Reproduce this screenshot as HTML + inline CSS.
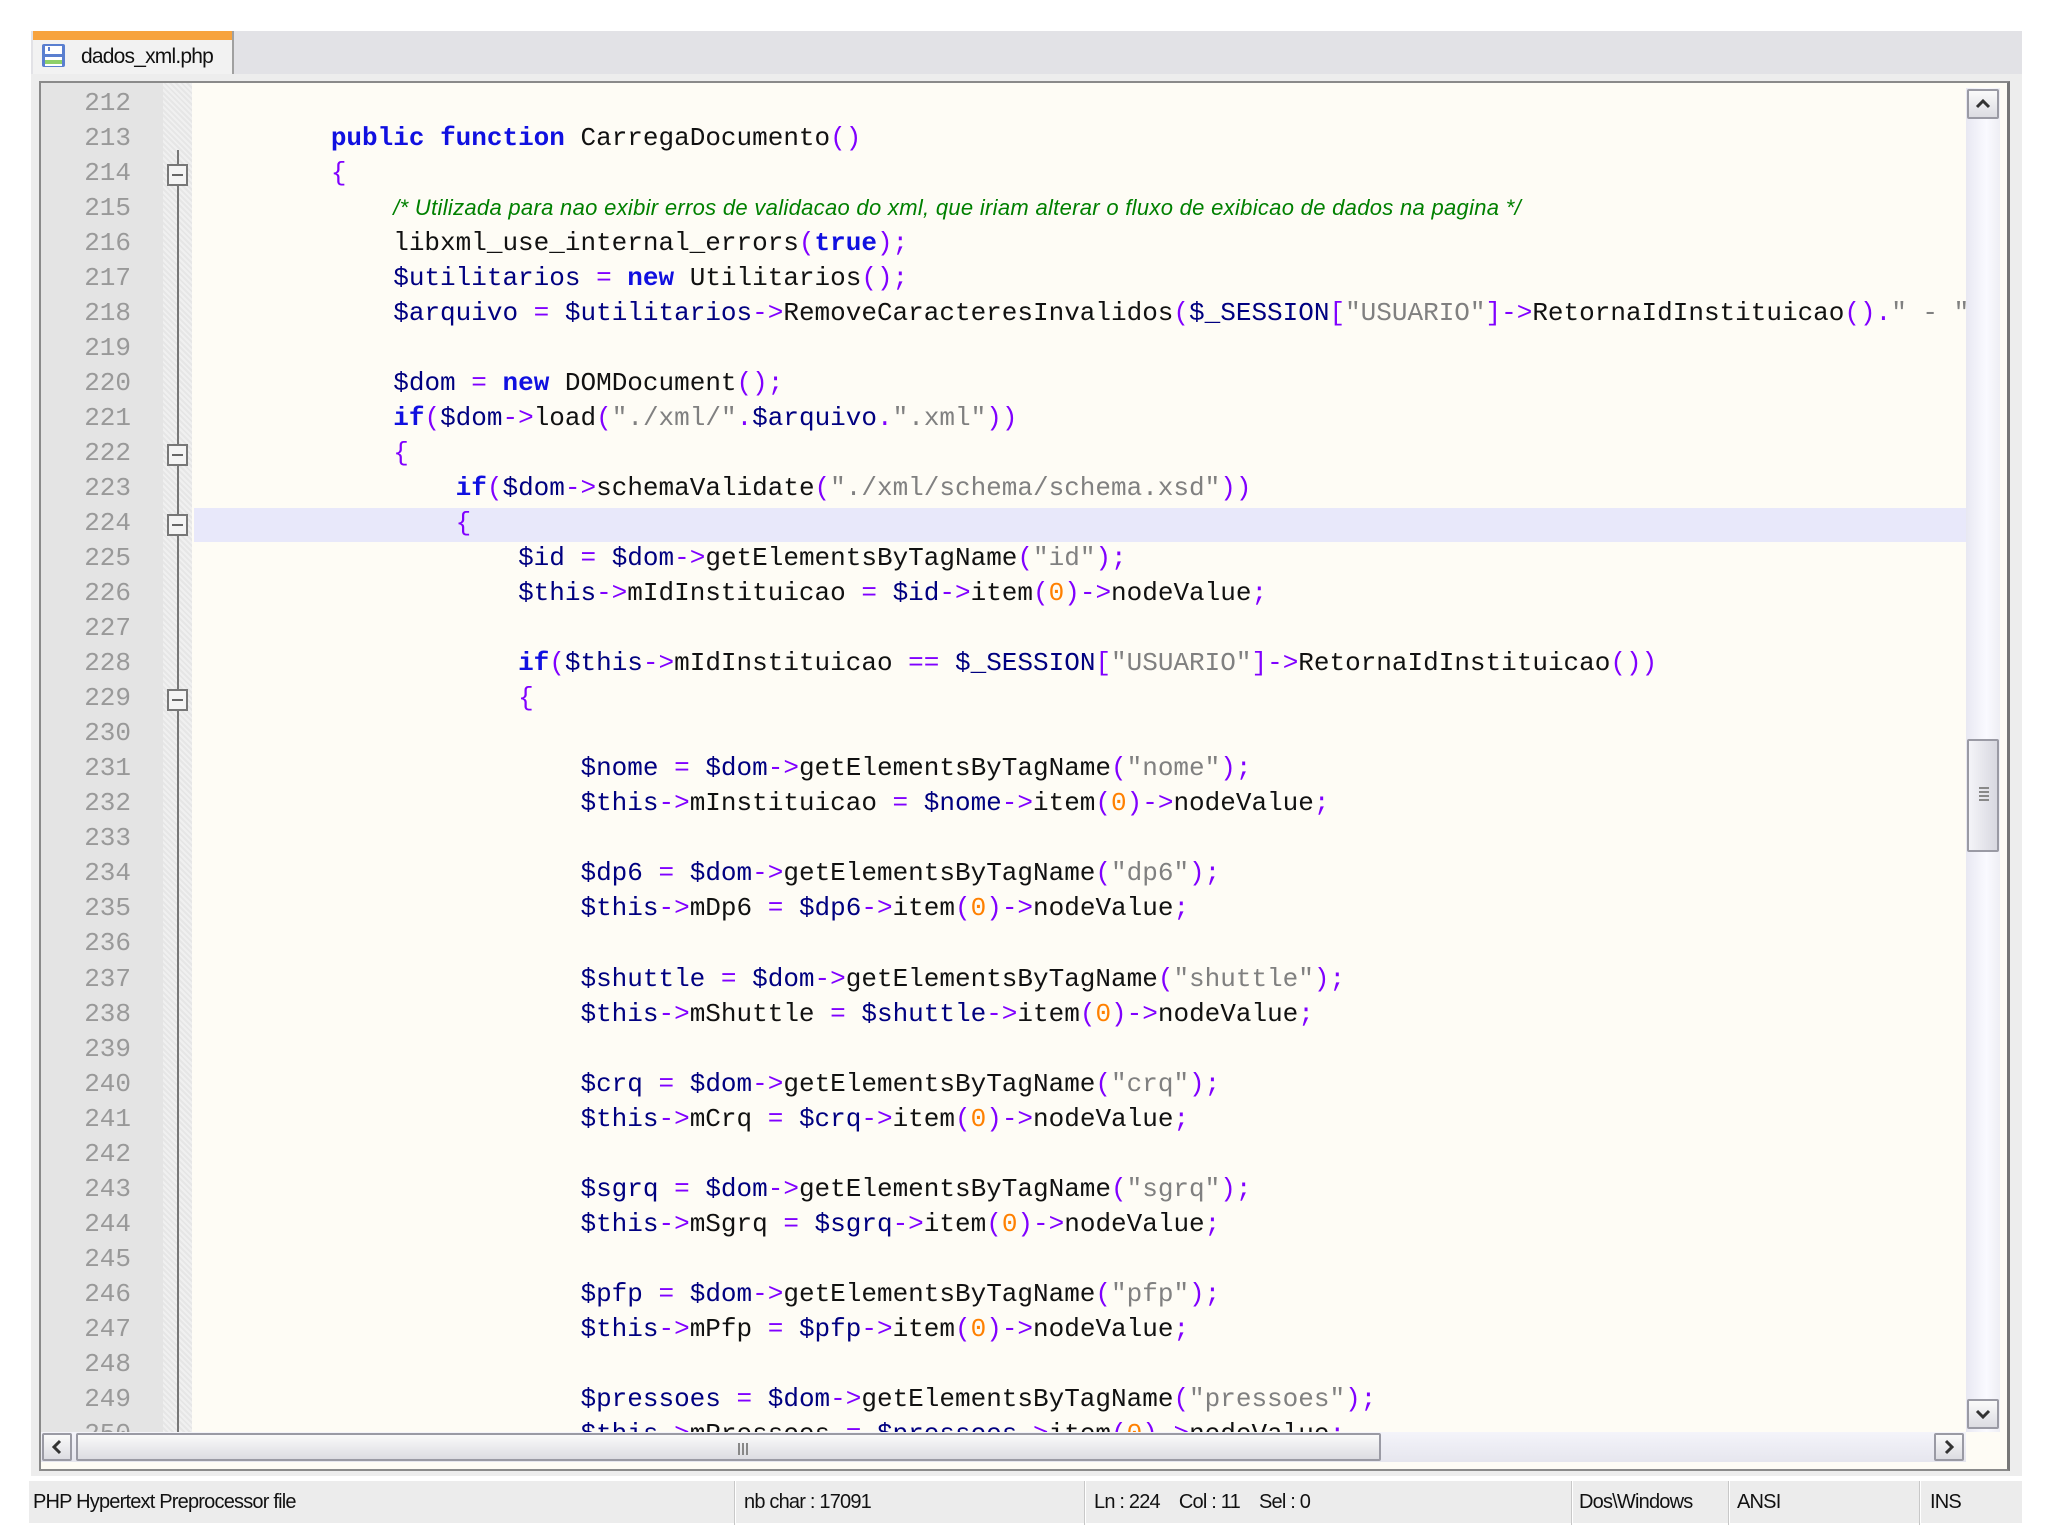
<!DOCTYPE html>
<html><head><meta charset="utf-8"><style>
*{margin:0;padding:0;box-sizing:border-box}
body{width:2048px;height:1535px;background:#fff;position:relative;overflow:hidden;font-family:"Liberation Sans",sans-serif}
.abs{position:absolute}
#strip{left:31px;top:31px;width:1991px;height:43px;background:#e2e2e6}
#tab{left:33px;top:31px;width:201px;height:45px;background:#f2f2f2;border-right:2px solid #a0a0a0}
#tab .bar{position:absolute;left:0;top:0;width:100%;height:9px;background:#f7a33e}
#tab .t{position:absolute;left:48px;top:14px;font-size:21px;color:#111;letter-spacing:-0.8px}
#frame{left:31px;top:74px;width:1991px;height:1402px;background:#ededed}
#ed{left:39px;top:81px;width:1971px;height:1390px;border:2px solid #8a8a8a;border-right:3px solid #777;background:#fefcf5}
#gut{left:41px;top:83px;width:122px;height:1349px;background:#e4e4e4}
#fold{left:163px;top:83px;width:29px;height:1349px;background:repeating-linear-gradient(45deg,#f0f0f0 0 2px,#e6e6e6 2px 4px)}
#vline{left:177px;top:150px;width:2px;height:1282px;background:#777}
.fb{position:absolute;left:167px;width:21px;height:22px;border:2px solid #777;background:#f4f4f4}
.fb:after{content:"";position:absolute;left:3px;right:3px;top:8px;height:2px;background:#666}
#hl{left:194px;top:508px;width:1778px;height:34px;background:#e8e8fa}
#code{left:41px;top:86px;width:1925px;height:1346px;overflow:hidden}
.ln{position:absolute;left:0;width:90px;text-align:right;font:26px "Liberation Mono",monospace;color:#999;height:35px;line-height:35px}
.cl{position:absolute;left:165px;white-space:pre;font:26px "Liberation Mono",monospace;color:#111;height:35px;line-height:35px}
.k{color:#1010e0;font-weight:bold}.v{color:#000080}.o{color:#8000ff}.s{color:#808080}.n{color:#ff8000}
.c{color:#008000;font:italic 22px "Liberation Sans",sans-serif;letter-spacing:0.3px}
#vs{left:1966px;top:88px;width:34px;height:1344px;background:linear-gradient(90deg,#e8e8f2,#fafaff 60%,#eeeef4)}
.btn{position:absolute;background:linear-gradient(#fafafa,#dcdce2);border:2px solid #9a9aa4;border-radius:2px}
.btn svg{position:absolute;left:50%;top:50%;transform:translate(-50%,-50%)}
#hs{left:41px;top:1432px;width:1925px;height:30px;background:linear-gradient(#f4f4fa,#e6e6ee)}
#status{left:29px;top:1479px;width:1993px;height:44px;background:#ececec;border-top:2px solid #fff;font-size:20px;color:#111;letter-spacing:-0.8px}
#status span{position:absolute;top:10px}
#status i{position:absolute;top:0;width:2px;height:44px;background:#fff;border-left:1px solid #c8c8c8}
</style></head><body>
<div id="strip" class="abs"></div>
<div id="tab" class="abs"><div class="bar"></div>
<svg style="position:absolute;left:8px;top:12px" width="26" height="26" viewBox="0 0 26 26"><rect x="1" y="1" width="23" height="23" rx="2" fill="#5a7fd0"/><rect x="4" y="3" width="17" height="8" fill="#fff"/><rect x="4" y="14" width="17" height="9" fill="#fff"/><rect x="4" y="17" width="17" height="4" fill="#8ed06a"/><rect x="7" y="4" width="2" height="4" fill="#5a7fd0"/></svg>
<div class="t">dados_xml.php</div></div>
<div id="frame" class="abs"></div>
<div id="ed" class="abs"></div>
<div id="gut" class="abs"></div>
<div id="fold" class="abs"></div>
<div id="hl" class="abs"></div>
<div id="vline" class="abs"></div>
<div class="fb" style="top:164px"></div>
<div class="fb" style="top:444px"></div>
<div class="fb" style="top:514px"></div>
<div class="fb" style="top:689px"></div>
<div id="code" class="abs">
<div class="ln" style="top:0px">212</div>
<div class="ln" style="top:35.02px">213</div><div class="cl" style="top:35.02px">        <span class="k">public</span> <span class="k">function</span> CarregaDocumento<span class="o">()</span></div>
<div class="ln" style="top:70.04px">214</div><div class="cl" style="top:70.04px">        <span class="o">{</span></div>
<div class="ln" style="top:105.06px">215</div><div class="cl" style="top:105.06px">            <span class="c">/* Utilizada para nao exibir erros de validacao do xml, que iriam alterar o fluxo de exibicao de dados na pagina */</span></div>
<div class="ln" style="top:140.08px">216</div><div class="cl" style="top:140.08px">            libxml_use_internal_errors<span class="o">(</span><span class="k">true</span><span class="o">);</span></div>
<div class="ln" style="top:175.1px">217</div><div class="cl" style="top:175.1px">            <span class="v">$utilitarios</span> <span class="o">=</span> <span class="k">new</span> Utilitarios<span class="o">();</span></div>
<div class="ln" style="top:210.12px">218</div><div class="cl" style="top:210.12px">            <span class="v">$arquivo</span> <span class="o">=</span> <span class="v">$utilitarios</span><span class="o">-&gt;</span>RemoveCaracteresInvalidos<span class="o">(</span><span class="v">$_SESSION</span><span class="o">[</span><span class="s">"USUARIO"</span><span class="o">]-&gt;</span>RetornaIdInstituicao<span class="o">().</span><span class="s">" - "</span></div>
<div class="ln" style="top:245.14px">219</div>
<div class="ln" style="top:280.16px">220</div><div class="cl" style="top:280.16px">            <span class="v">$dom</span> <span class="o">=</span> <span class="k">new</span> DOMDocument<span class="o">();</span></div>
<div class="ln" style="top:315.18px">221</div><div class="cl" style="top:315.18px">            <span class="k">if</span><span class="o">(</span><span class="v">$dom</span><span class="o">-&gt;</span>load<span class="o">(</span><span class="s">"./xml/"</span><span class="o">.</span><span class="v">$arquivo</span><span class="o">.</span><span class="s">".xml"</span><span class="o">))</span></div>
<div class="ln" style="top:350.2px">222</div><div class="cl" style="top:350.2px">            <span class="o">{</span></div>
<div class="ln" style="top:385.22px">223</div><div class="cl" style="top:385.22px">                <span class="k">if</span><span class="o">(</span><span class="v">$dom</span><span class="o">-&gt;</span>schemaValidate<span class="o">(</span><span class="s">"./xml/schema/schema.xsd"</span><span class="o">))</span></div>
<div class="ln" style="top:420.24px">224</div><div class="cl" style="top:420.24px">                <span class="o">{</span></div>
<div class="ln" style="top:455.26px">225</div><div class="cl" style="top:455.26px">                    <span class="v">$id</span> <span class="o">=</span> <span class="v">$dom</span><span class="o">-&gt;</span>getElementsByTagName<span class="o">(</span><span class="s">"id"</span><span class="o">);</span></div>
<div class="ln" style="top:490.28px">226</div><div class="cl" style="top:490.28px">                    <span class="v">$this</span><span class="o">-&gt;</span>mIdInstituicao <span class="o">=</span> <span class="v">$id</span><span class="o">-&gt;</span>item<span class="o">(</span><span class="n">0</span><span class="o">)-&gt;</span>nodeValue<span class="o">;</span></div>
<div class="ln" style="top:525.3px">227</div>
<div class="ln" style="top:560.32px">228</div><div class="cl" style="top:560.32px">                    <span class="k">if</span><span class="o">(</span><span class="v">$this</span><span class="o">-&gt;</span>mIdInstituicao <span class="o">==</span> <span class="v">$_SESSION</span><span class="o">[</span><span class="s">"USUARIO"</span><span class="o">]-&gt;</span>RetornaIdInstituicao<span class="o">())</span></div>
<div class="ln" style="top:595.34px">229</div><div class="cl" style="top:595.34px">                    <span class="o">{</span></div>
<div class="ln" style="top:630.36px">230</div>
<div class="ln" style="top:665.38px">231</div><div class="cl" style="top:665.38px">                        <span class="v">$nome</span> <span class="o">=</span> <span class="v">$dom</span><span class="o">-&gt;</span>getElementsByTagName<span class="o">(</span><span class="s">"nome"</span><span class="o">);</span></div>
<div class="ln" style="top:700.4px">232</div><div class="cl" style="top:700.4px">                        <span class="v">$this</span><span class="o">-&gt;</span>mInstituicao <span class="o">=</span> <span class="v">$nome</span><span class="o">-&gt;</span>item<span class="o">(</span><span class="n">0</span><span class="o">)-&gt;</span>nodeValue<span class="o">;</span></div>
<div class="ln" style="top:735.42px">233</div>
<div class="ln" style="top:770.44px">234</div><div class="cl" style="top:770.44px">                        <span class="v">$dp6</span> <span class="o">=</span> <span class="v">$dom</span><span class="o">-&gt;</span>getElementsByTagName<span class="o">(</span><span class="s">"dp6"</span><span class="o">);</span></div>
<div class="ln" style="top:805.46px">235</div><div class="cl" style="top:805.46px">                        <span class="v">$this</span><span class="o">-&gt;</span>mDp6 <span class="o">=</span> <span class="v">$dp6</span><span class="o">-&gt;</span>item<span class="o">(</span><span class="n">0</span><span class="o">)-&gt;</span>nodeValue<span class="o">;</span></div>
<div class="ln" style="top:840.48px">236</div>
<div class="ln" style="top:875.5px">237</div><div class="cl" style="top:875.5px">                        <span class="v">$shuttle</span> <span class="o">=</span> <span class="v">$dom</span><span class="o">-&gt;</span>getElementsByTagName<span class="o">(</span><span class="s">"shuttle"</span><span class="o">);</span></div>
<div class="ln" style="top:910.52px">238</div><div class="cl" style="top:910.52px">                        <span class="v">$this</span><span class="o">-&gt;</span>mShuttle <span class="o">=</span> <span class="v">$shuttle</span><span class="o">-&gt;</span>item<span class="o">(</span><span class="n">0</span><span class="o">)-&gt;</span>nodeValue<span class="o">;</span></div>
<div class="ln" style="top:945.54px">239</div>
<div class="ln" style="top:980.56px">240</div><div class="cl" style="top:980.56px">                        <span class="v">$crq</span> <span class="o">=</span> <span class="v">$dom</span><span class="o">-&gt;</span>getElementsByTagName<span class="o">(</span><span class="s">"crq"</span><span class="o">);</span></div>
<div class="ln" style="top:1015.58px">241</div><div class="cl" style="top:1015.58px">                        <span class="v">$this</span><span class="o">-&gt;</span>mCrq <span class="o">=</span> <span class="v">$crq</span><span class="o">-&gt;</span>item<span class="o">(</span><span class="n">0</span><span class="o">)-&gt;</span>nodeValue<span class="o">;</span></div>
<div class="ln" style="top:1050.6px">242</div>
<div class="ln" style="top:1085.62px">243</div><div class="cl" style="top:1085.62px">                        <span class="v">$sgrq</span> <span class="o">=</span> <span class="v">$dom</span><span class="o">-&gt;</span>getElementsByTagName<span class="o">(</span><span class="s">"sgrq"</span><span class="o">);</span></div>
<div class="ln" style="top:1120.64px">244</div><div class="cl" style="top:1120.64px">                        <span class="v">$this</span><span class="o">-&gt;</span>mSgrq <span class="o">=</span> <span class="v">$sgrq</span><span class="o">-&gt;</span>item<span class="o">(</span><span class="n">0</span><span class="o">)-&gt;</span>nodeValue<span class="o">;</span></div>
<div class="ln" style="top:1155.66px">245</div>
<div class="ln" style="top:1190.68px">246</div><div class="cl" style="top:1190.68px">                        <span class="v">$pfp</span> <span class="o">=</span> <span class="v">$dom</span><span class="o">-&gt;</span>getElementsByTagName<span class="o">(</span><span class="s">"pfp"</span><span class="o">);</span></div>
<div class="ln" style="top:1225.7px">247</div><div class="cl" style="top:1225.7px">                        <span class="v">$this</span><span class="o">-&gt;</span>mPfp <span class="o">=</span> <span class="v">$pfp</span><span class="o">-&gt;</span>item<span class="o">(</span><span class="n">0</span><span class="o">)-&gt;</span>nodeValue<span class="o">;</span></div>
<div class="ln" style="top:1260.72px">248</div>
<div class="ln" style="top:1295.74px">249</div><div class="cl" style="top:1295.74px">                        <span class="v">$pressoes</span> <span class="o">=</span> <span class="v">$dom</span><span class="o">-&gt;</span>getElementsByTagName<span class="o">(</span><span class="s">"pressoes"</span><span class="o">);</span></div>
<div class="ln" style="top:1330.76px">250</div><div class="cl" style="top:1330.76px">                        <span class="v">$this</span><span class="o">-&gt;</span>mPressoes <span class="o">=</span> <span class="v">$pressoes</span><span class="o">-&gt;</span>item<span class="o">(</span><span class="n">0</span><span class="o">)-&gt;</span>nodeValue<span class="o">;</span></div>
</div>
<div id="vs" class="abs">
<div class="btn" style="left:1px;top:1px;width:32px;height:30px"><svg width="16" height="10" viewBox="0 0 16 10"><path d="M2 8 L8 2 L14 8" fill="none" stroke="#333" stroke-width="3"/></svg></div>
<div class="btn" style="left:1px;top:651px;width:32px;height:113px;background:linear-gradient(90deg,#f4f4f8,#d8d8e0)"><div style="position:absolute;left:10px;top:46px;width:10px;height:16px;background:repeating-linear-gradient(#888 0 2px,transparent 2px 4px)"></div></div>
<div class="btn" style="left:1px;top:1311px;width:32px;height:30px"><svg width="16" height="10" viewBox="0 0 16 10"><path d="M2 2 L8 8 L14 2" fill="none" stroke="#333" stroke-width="3"/></svg></div>
</div>
<div id="hs" class="abs">
<div class="btn" style="left:1px;top:1px;width:30px;height:28px"><svg width="10" height="16" viewBox="0 0 10 16"><path d="M8 2 L2 8 L8 14" fill="none" stroke="#333" stroke-width="3"/></svg></div>
<div class="btn" style="left:35px;top:1px;width:1305px;height:28px"><div style="position:absolute;left:660px;top:8px;width:12px;height:12px;background:repeating-linear-gradient(90deg,#888 0 2px,transparent 2px 4px)"></div></div>
<div class="btn" style="left:1893px;top:1px;width:30px;height:28px"><svg width="10" height="16" viewBox="0 0 10 16"><path d="M2 2 L8 8 L2 14" fill="none" stroke="#333" stroke-width="3"/></svg></div>
</div>
<div id="status" class="abs">
<span style="left:4px">PHP Hypertext Preprocessor file</span>
<i style="left:705px"></i><span style="left:715px">nb char : 17091</span>
<i style="left:1055px"></i><span style="left:1065px">Ln : 224 &nbsp;&nbsp; Col : 11 &nbsp;&nbsp; Sel : 0</span>
<i style="left:1542px"></i><span style="left:1550px">Dos\Windows</span>
<i style="left:1699px"></i><span style="left:1708px">ANSI</span>
<i style="left:1890px"></i><span style="left:1901px">INS</span>
</div>
</body></html>
